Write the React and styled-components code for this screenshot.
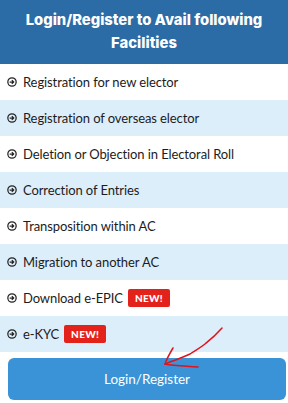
import styled, { createGlobalStyle } from "styled-components";

const GlobalStyle = createGlobalStyle`
  html, body {
    margin: 0;
    padding: 0;
    background: #ffffff;
  }
  * {
    box-sizing: border-box;
  }
`;

const Card = styled.div`
  position: relative;
  width: 288px;
  font-family: Lato, "Liberation Sans", sans-serif;
`;

const Header = styled.div`
  background: #2b6ba6;
  color: #ffffff;
  height: 64px;
  padding: 9px 8px 0;
  text-align: center;
  font-family: Inter, "Open Sans", sans-serif;
  font-weight: 800;
  font-size: 14.8px;
  line-height: 23px;
`;

const List = styled.ul`
  list-style: none;
  margin: 0;
  padding: 0;
`;

const Item = styled.li`
  display: flex;
  align-items: center;
  gap: 6px;
  height: 36px;
  padding: 0 7px;
  background: ${(p) => (p.$shaded ? "#ddeefb" : "#ffffff")};
  color: #1c1c1c;
  font-size: 13px;
  letter-spacing: -0.1px;
`;

const Icon = styled.svg`
  width: 10px;
  height: 10px;
  flex: none;
`;

const Badge = styled.span`
  display: inline-flex;
  align-items: center;
  height: 18px;
  padding: 0 7px;
  margin-left: -1px;
  background: #e3231b;
  color: #ffffff;
  font-weight: 900;
  font-size: 10px;
  letter-spacing: 0.3px;
  border-radius: 2px;
`;

const Footer = styled.div`
  padding: 6px 2px 3px 8px;
`;

const Button = styled.button`
  width: 100%;
  height: 42px;
  border: none;
  border-radius: 6px;
  background: #3a93d6;
  color: #ffffff;
  font-family: Lato, "Liberation Sans", sans-serif;
  font-size: 13.5px;
  cursor: pointer;
`;

const Scribble = styled.svg`
  position: absolute;
  left: 0;
  top: 0;
  pointer-events: none;
`;

const items = [
  { label: "Registration for new elector" },
  { label: "Registration of overseas elector" },
  { label: "Deletion or Objection in Electoral Roll" },
  { label: "Correction of Entries" },
  { label: "Transposition within AC" },
  { label: "Migration to another AC" },
  { label: "Download e-EPIC", isNew: true },
  { label: "e-KYC", isNew: true },
];

function ArrowCircle() {
  return (
    <Icon viewBox="0 0 12 12">
      <circle cx="6" cy="6" r="5" fill="none" stroke="#222" strokeWidth="1.5" />
      <path d="M3.2 6h4.8M5.8 3.8L8 6 5.8 8.2" fill="none" stroke="#222" strokeWidth="1.5" />
    </Icon>
  );
}

export default function App() {
  return (
    <>
      <GlobalStyle />
      <Card>
        <Header>Login/Register to Avail following Facilities</Header>
        <List>
          {items.map((it, i) => (
            <Item key={it.label} $shaded={i % 2 === 1}>
              <ArrowCircle />
              <span>{it.label}</span>
              {it.isNew && <Badge>NEW!</Badge>}
            </Item>
          ))}
        </List>
        <Footer>
          <Button>Login/Register</Button>
        </Footer>
        <Scribble width="288" height="403">
          <path
            d="M222 328 C214 337 210 340 205 344 C200 348 196 350 190 354 C182 358 172 361 165 364"
            fill="none"
            stroke="#e0141c"
            strokeWidth="1.5"
            strokeLinecap="round"
          />
          <path
            d="M173 348 C170 353 167 358 165 364 C175 366 186 366 198 367"
            fill="none"
            stroke="#e0141c"
            strokeWidth="1.5"
            strokeLinecap="round"
          />
        </Scribble>
      </Card>
    </>
  );
}
